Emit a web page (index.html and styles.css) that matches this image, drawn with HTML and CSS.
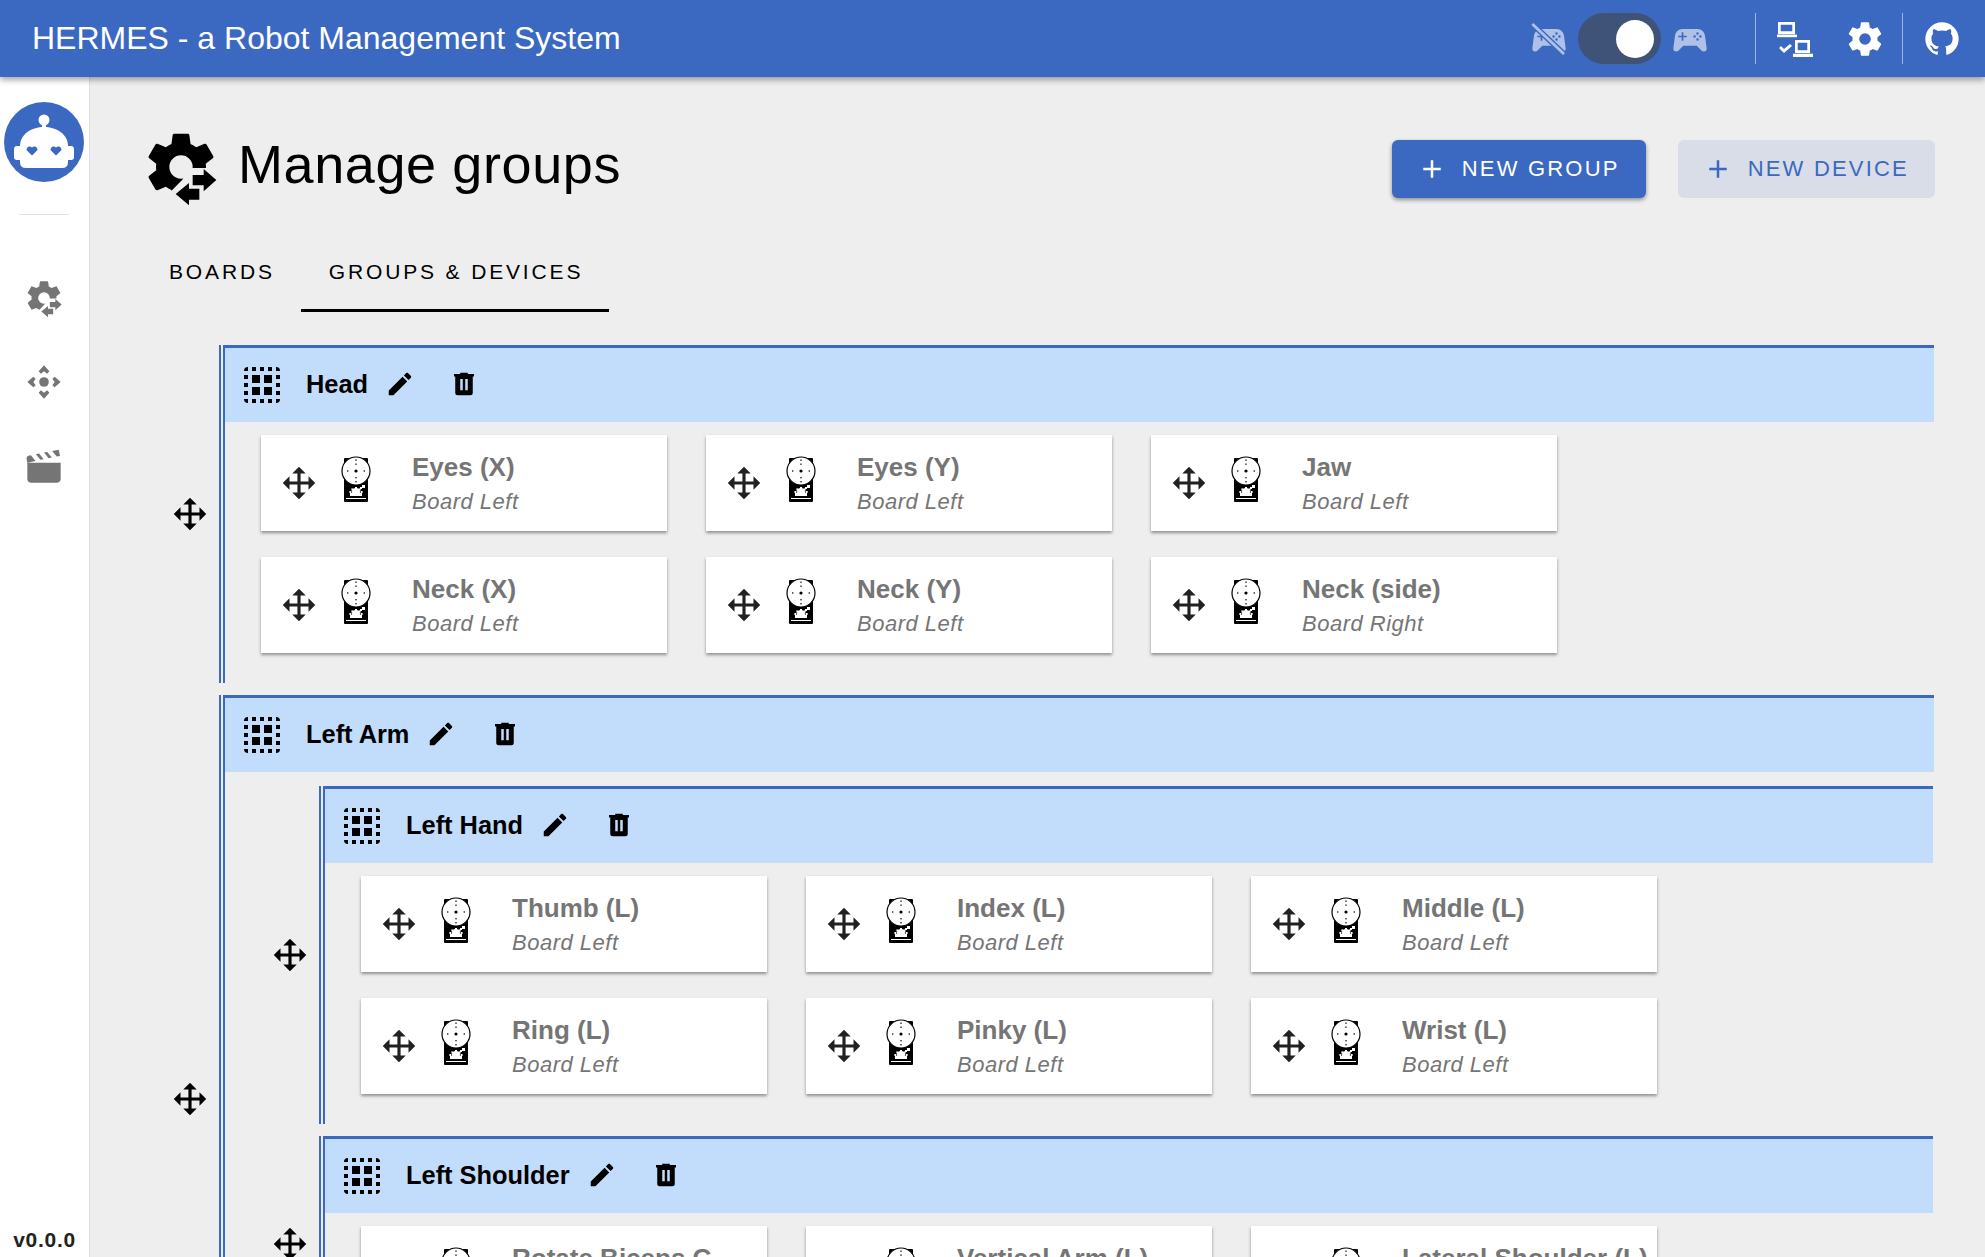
FILE: index.html
```html
<!DOCTYPE html>
<html lang="en">
  <head>
    <meta charset="UTF-8" />
    <title>HERMES - a Robot Management System</title>
    <link rel="stylesheet" href="styles.css">
  </head>
  <body>
    <!-- Shared icons -->
    <svg class="sprites" xmlns="http://www.w3.org/2000/svg">
      <symbol id="i-move" viewBox="0 0 24 24"><path d="M13,6V11H18V7.75L22.25,12L18,16.25V13H13V18H16.25L12,22.25L7.75,18H11V13H6V16.25L1.75,12L6,7.75V11H11V6H7.75L12,1.75L16.25,6H13Z"/></symbol>
      <symbol id="i-pencil" viewBox="0 0 24 24"><path d="M20.71,7.04C21.1,6.65 21.1,6 20.71,5.63L18.37,3.29C18,2.9 17.35,2.9 16.96,3.29L15.12,5.12L18.87,8.87M3,17.25V21H6.75L17.81,9.93L14.06,6.18L3,17.25Z"/></symbol>
      <symbol id="i-trash" viewBox="0 0 24 24"><path d="M9,3V4H4V6H5V19A2,2 0 0,0 7,21H17A2,2 0 0,0 19,19V6H20V4H15V3H9M9,8H11V17H9V8M13,8H15V17H13V8Z"/></symbol>
      <symbol id="i-select" viewBox="0 0 24 24"><path d="M5,3A2,2 0 0,0 3,5H5M7,3V5H9V3M11,3V5H13V3M15,3V5H17V3M19,3V5H21A2,2 0 0,0 19,3M3,7V9H5V7M7,7V11H11V7M13,7V11H17V7M19,7V9H21V7M3,11V13H5V11M19,11V13H21V11M7,13V17H11V13M13,13V17H17V13M3,15V17H5V15M19,15V17H21V15M3,19A2,2 0 0,0 5,21V19M7,19V21H9V19M11,19V21H13V19M15,19V21H17V19M19,19V21A2,2 0 0,0 21,19Z"/></symbol>
      <symbol id="i-plus" viewBox="0 0 24 24"><path d="M19,13H13V19H11V13H5V11H11V5H13V11H19V13Z"/></symbol>
      <symbol id="i-cog" viewBox="0 0 24 24"><path d="M12,15.5A3.5,3.5 0 0,1 8.5,12A3.5,3.5 0 0,1 12,8.5A3.5,3.5 0 0,1 15.5,12A3.5,3.5 0 0,1 12,15.5M19.43,12.97C19.47,12.65 19.5,12.33 19.5,12C19.5,11.67 19.47,11.34 19.43,11L21.54,9.37C21.73,9.22 21.78,8.95 21.66,8.73L19.66,5.27C19.54,5.05 19.27,4.96 19.05,5.05L16.56,6.05C16.04,5.66 15.5,5.32 14.87,5.07L14.5,2.42C14.46,2.18 14.25,2 14,2H10C9.75,2 9.54,2.18 9.5,2.42L9.13,5.07C8.5,5.32 7.96,5.66 7.44,6.05L4.95,5.05C4.73,4.96 4.46,5.05 4.34,5.27L2.34,8.73C2.21,8.95 2.27,9.22 2.46,9.37L4.57,11C4.53,11.34 4.5,11.67 4.5,12C4.5,12.33 4.53,12.65 4.57,12.97L2.46,14.63C2.27,14.78 2.21,15.05 2.34,15.27L4.34,18.73C4.46,18.95 4.73,19.03 4.95,18.95L7.44,17.94C7.96,18.34 8.5,18.68 9.13,18.93L9.5,21.58C9.54,21.82 9.75,22 10,22H14C14.25,22 14.46,21.82 14.5,21.58L14.87,18.93C15.5,18.67 16.04,18.34 16.56,17.94L19.05,18.95C19.27,19.03 19.54,18.95 19.66,18.73L21.66,15.27C21.78,15.05 21.73,14.78 21.54,14.63L19.43,12.97Z"/></symbol>
      <symbol id="i-cog-transfer" viewBox="0 0 24 24">
        <path d="M12,15.5A3.5,3.5 0 0,1 8.5,12A3.5,3.5 0 0,1 12,8.5A3.5,3.5 0 0,1 15.5,12A3.5,3.5 0 0,1 12,15.5M19.43,12.97C19.47,12.65 19.5,12.33 19.5,12C19.5,11.67 19.47,11.34 19.43,11L21.54,9.37C21.73,9.22 21.78,8.95 21.66,8.73L19.66,5.27C19.54,5.05 19.27,4.96 19.05,5.05L16.56,6.05C16.04,5.66 15.5,5.32 14.87,5.07L14.5,2.42C14.46,2.18 14.25,2 14,2H10C9.75,2 9.54,2.18 9.5,2.42L9.13,5.07C8.5,5.32 7.96,5.66 7.44,6.05L4.95,5.05C4.73,4.96 4.46,5.05 4.34,5.27L2.34,8.73C2.21,8.95 2.27,9.22 2.46,9.37L4.57,11C4.53,11.34 4.5,11.67 4.5,12C4.5,12.33 4.53,12.65 4.57,12.97L2.46,14.63C2.27,14.78 2.21,15.05 2.34,15.27L4.34,18.73C4.46,18.95 4.73,19.03 4.95,18.95L7.44,17.94C7.96,18.34 8.5,18.68 9.13,18.93L9.5,21.58C9.54,21.82 9.75,22 10,22H14C14.25,22 14.46,21.82 14.5,21.58L14.87,18.93C15.5,18.67 16.04,18.34 16.56,17.94L19.05,18.95C19.27,19.03 19.54,18.95 19.66,18.73L21.66,15.27C21.78,15.05 21.73,14.78 21.54,14.63L19.43,12.97Z"/>
        <polygon class="knock" points="8.7,19.6 12.4,15.8 14.6,12.3 24,12.3 24,24 8.7,24"/>
        <polygon points="15.5,14.4 18.8,14.4 18.8,12.6 22.6,15.9 18.8,19.3 18.8,17.5 15.5,17.5"/>
        <polygon points="17.5,18.5 14.4,18.5 14.4,16.8 10.4,20.1 14.4,23.5 14.4,21.8 17.5,21.8"/>
      </symbol>
      <symbol id="i-joints" viewBox="0 0 24 24">
        <circle cx="12" cy="12" r="2.9"/>
        <polygon points="12,2 15.2,5.6 13.9,7 12,5.6 10.1,7 8.8,5.6"/>
        <polygon points="12,22 15.2,18.4 13.9,17 12,18.4 10.1,17 8.8,18.4"/>
        <polygon points="2,12 5.6,8.8 7,10.1 5.6,12 7,13.9 5.6,15.2"/>
        <polygon points="22,12 18.4,8.8 17,10.1 18.4,12 17,13.9 18.4,15.2"/>
      </symbol>
      <symbol id="i-movie" viewBox="0 0 24 24"><path d="M20.84 2.18L16.91 2.96L19.65 6.32L21.62 5.93L20.84 2.18M13.97 3.54L12 3.93L14.75 7.31L16.71 6.91L13.97 3.54M9.07 4.5L7.1 4.91L9.85 8.27L11.81 7.89L9.07 4.5M4.16 5.5L3.18 5.69A2 2 0 0 0 1.61 8.04L2 10L6.9 9.03L4.16 5.5M2 10V20C2 21.11 2.9 22 4 22H20C21.11 22 22 21.11 22 20V10H2Z"/></symbol>
      <symbol id="i-controller" viewBox="0 0 24 24"><path d="M7.97,16L5,19C4.67,19.3 4.23,19.5 3.75,19.5A1.75,1.75 0 0,1 2,17.75V17.5L3,10.12C3.21,7.81 5.14,6 7.5,6H16.5C18.86,6 20.79,7.81 21,10.12L22,17.5V17.75A1.75,1.75 0 0,1 20.25,19.5C19.77,19.5 19.33,19.3 19,19L16.03,16H7.97M7,8V10H5V11H7V13H8V11H10V10H8V8H7M16.5,8A0.75,0.75 0 0,0 15.75,8.75A0.75,0.75 0 0,0 16.5,9.5A0.75,0.75 0 0,0 17.25,8.75A0.75,0.75 0 0,0 16.5,8M14.75,9.75A0.75,0.75 0 0,0 14,10.5A0.75,0.75 0 0,0 14.75,11.25A0.75,0.75 0 0,0 15.5,10.5A0.75,0.75 0 0,0 14.75,9.75M18.25,9.75A0.75,0.75 0 0,0 17.5,10.5A0.75,0.75 0 0,0 18.25,11.25A0.75,0.75 0 0,0 19,10.5A0.75,0.75 0 0,0 18.25,9.75M16.5,11.5A0.75,0.75 0 0,0 15.75,12.25A0.75,0.75 0 0,0 16.5,13A0.75,0.75 0 0,0 17.25,12.25A0.75,0.75 0 0,0 16.5,11.5Z"/></symbol>
      <symbol id="i-github" viewBox="0 0 24 24"><path d="M12,2A10,10 0 0,0 2,12C2,16.42 4.87,20.17 8.84,21.5C9.34,21.58 9.5,21.27 9.5,21C9.5,20.77 9.5,20.14 9.5,19.31C6.73,19.91 6.14,17.97 6.14,17.97C5.68,16.81 5.03,16.5 5.03,16.5C4.12,15.88 5.1,15.9 5.1,15.9C6.1,15.97 6.63,16.93 6.63,16.93C7.5,18.45 8.97,18 9.54,17.76C9.63,17.11 9.89,16.67 10.17,16.42C7.95,16.17 5.64,15.31 5.64,11.5C5.64,10.39 6,9.5 6.65,8.79C6.55,8.54 6.2,7.5 6.75,6.15C6.75,6.15 7.59,5.88 9.5,7.17C10.29,6.95 11.15,6.84 12,6.84C12.85,6.84 13.71,6.95 14.5,7.17C16.41,5.88 17.25,6.15 17.25,6.15C17.8,7.5 17.45,8.54 17.35,8.79C18,9.5 18.36,10.39 18.36,11.5C18.36,15.32 16.04,16.16 13.81,16.41C14.17,16.72 14.5,17.33 14.5,18.26C14.5,19.6 14.5,20.68 14.5,21C14.5,21.27 14.66,21.59 15.17,21.5C19.14,20.16 22,16.42 22,12A10,10 0 0,0 12,2Z"/></symbol>
      <symbol id="i-servo" viewBox="0 0 30 46">
        <rect x="3" y="2" width="24" height="44" rx="1" fill="#000"/>
        <circle cx="15" cy="15" r="14" fill="#fff" stroke="#000" stroke-width="1.2"/>
        <circle cx="15" cy="15" r="1.6" fill="#000"/>
        <g fill="#000">
          <rect x="14.4" y="3.5" width="1.2" height="1.4"/>
          <rect x="14.4" y="7.5" width="1.2" height="1.4"/>
          <rect x="14.4" y="21" width="1.2" height="1.4"/>
          <rect x="14.4" y="25" width="1.2" height="1.4"/>
          <rect x="6" y="14.4" width="1.4" height="1.2"/>
          <rect x="22.6" y="14.4" width="1.4" height="1.2"/>
        </g>
        <g fill="#fff">
          <circle cx="15" cy="36" r="4"/>
          <rect x="9" y="37" width="12" height="3"/>
          <rect x="14" y="31" width="2" height="2.5"/>
          <rect x="10.4" y="32.4" width="2" height="2.2"/>
          <rect x="17.6" y="32.4" width="2" height="2.2"/>
          <rect x="8.4" y="35" width="2" height="2"/>
          <rect x="19.600" y="35" width="2" height="2"/>
          <rect x="21" y="29" width="3" height="3"/>
          <rect x="19" y="31" width="2" height="2"/>
          <rect x="5" y="42" width="20" height="1"/>
        </g>
      </symbol>
    </svg>

    <header class="topbar">
      <div class="topbar-title">HERMES - a Robot Management System</div>
      <div class="topbar-tools">
        <svg class="tb-icon tb-faded controller-off" viewBox="0 0 24 24">
          <use href="#i-controller"/>
          <line class="slash-gap" x1="2" y1="3" x2="21" y2="21"/>
          <line class="slash" x1="2" y1="3" x2="21" y2="21"/>
        </svg>
        <div class="switch"><span class="knob"></span></div>
        <svg class="tb-icon tb-faded"><use href="#i-controller"/></svg>
        <span class="tb-divider first"></span>
        <svg class="tb-laptops" viewBox="0 0 36 36" fill="#fff">
          <path d="M1 1H18V13H1ZM3.7 3.7V10.3H15.3V3.7Z" fill-rule="evenodd"/>
          <rect x="0" y="13.5" width="20" height="2.7"/>
          <path d="M18 19H33V32H18ZM20.7 21.7V29.3H30.3V21.7Z" fill-rule="evenodd"/>
          <rect x="16" y="32.7" width="20" height="3.3"/>
          <path d="M2 27L4 25L7 28L13 23L15 25L7 32Z"/>
        </svg>
        <svg class="tb-icon cog-icon"><use href="#i-cog"/></svg>
        <span class="tb-divider"></span>
        <svg class="tb-icon github-icon"><use href="#i-github"/></svg>
      </div>
    </header>

    <div class="layout">
      <aside class="sidebar">
        <svg class="avatar" viewBox="0 0 80 80">
          <circle cx="40" cy="40" r="40" fill="#3b68c1"/>
          <g fill="#fff">
            <circle cx="40" cy="18" r="5.5"/>
            <rect x="38" y="20" width="4" height="8"/>
            <path d="M22 66Q16 66 16 60V44C16 32 28 25 40 25C52 25 64 32 64 44V60Q64 66 58 66Z"/>
            <rect x="10" y="44" width="60" height="14" rx="3"/>
          </g>
          <g fill="#3b68c1">
            <path d="M28 53.5L22.5 48A3.2 3.2 0 0 1 28 45.5A3.2 3.2 0 0 1 33.5 48Z"/>
            <path d="M52 53.5L46.5 48A3.2 3.2 0 0 1 52 45.5A3.2 3.2 0 0 1 57.5 48Z"/>
          </g>
        </svg>
        <hr class="side-divider" />
        <nav class="side-nav">
          <svg class="side-icon"><use href="#i-cog-transfer"/></svg>
          <svg class="side-icon"><use href="#i-joints"/></svg>
          <svg class="side-icon"><use href="#i-movie"/></svg>
        </nav>
        <div class="version">v0.0.0</div>
      </aside>

      <main class="content">
        <div class="page-head">
          <svg class="page-icon"><use href="#i-cog-transfer"/></svg>
          <h1 class="page-title">Manage groups</h1>
          <button class="btn btn-primary"><svg class="btn-icon"><use href="#i-plus"/></svg>NEW GROUP</button>
          <button class="btn btn-muted"><svg class="btn-icon"><use href="#i-plus"/></svg>NEW DEVICE</button>
        </div>

        <div class="tabs">
          <div class="tab">BOARDS</div>
          <div class="tab active">GROUPS &amp; DEVICES</div>
        </div>

        <div class="groups">
          <!-- Head -->
          <section class="group">
            <div class="handle"><svg class="move-icon"><use href="#i-move"/></svg></div>
            <div class="group-line">
              <div class="group-box">
                <div class="group-bar">
                  <svg class="select-icon"><use href="#i-select"/></svg>
                  <span class="group-name">Head</span>
                  <svg class="bar-icon"><use href="#i-pencil"/></svg>
                  <svg class="bar-icon trash"><use href="#i-trash"/></svg>
                </div>
                <div class="cards">
                  <div class="card"><svg class="move-icon"><use href="#i-move"/></svg><svg class="servo"><use href="#i-servo"/></svg><div class="card-text"><div class="card-name">Eyes (X)</div><div class="card-board">Board Left</div></div></div>
                  <div class="card"><svg class="move-icon"><use href="#i-move"/></svg><svg class="servo"><use href="#i-servo"/></svg><div class="card-text"><div class="card-name">Eyes (Y)</div><div class="card-board">Board Left</div></div></div>
                  <div class="card"><svg class="move-icon"><use href="#i-move"/></svg><svg class="servo"><use href="#i-servo"/></svg><div class="card-text"><div class="card-name">Jaw</div><div class="card-board">Board Left</div></div></div>
                  <div class="card"><svg class="move-icon"><use href="#i-move"/></svg><svg class="servo"><use href="#i-servo"/></svg><div class="card-text"><div class="card-name">Neck (X)</div><div class="card-board">Board Left</div></div></div>
                  <div class="card"><svg class="move-icon"><use href="#i-move"/></svg><svg class="servo"><use href="#i-servo"/></svg><div class="card-text"><div class="card-name">Neck (Y)</div><div class="card-board">Board Left</div></div></div>
                  <div class="card"><svg class="move-icon"><use href="#i-move"/></svg><svg class="servo"><use href="#i-servo"/></svg><div class="card-text"><div class="card-name">Neck (side)</div><div class="card-board">Board Right</div></div></div>
                </div>
              </div>
            </div>
          </section>

          <!-- Left Arm -->
          <section class="group group-parent">
            <div class="handle"><svg class="move-icon"><use href="#i-move"/></svg></div>
            <div class="group-line">
              <div class="group-box">
                <div class="group-bar">
                  <svg class="select-icon"><use href="#i-select"/></svg>
                  <span class="group-name">Left Arm</span>
                  <svg class="bar-icon"><use href="#i-pencil"/></svg>
                  <svg class="bar-icon trash"><use href="#i-trash"/></svg>
                </div>
                <div class="children">
                  <section class="group">
                    <div class="handle"><svg class="move-icon"><use href="#i-move"/></svg></div>
                    <div class="group-line">
                      <div class="group-box">
                        <div class="group-bar">
                          <svg class="select-icon"><use href="#i-select"/></svg>
                          <span class="group-name">Left Hand</span>
                          <svg class="bar-icon"><use href="#i-pencil"/></svg>
                          <svg class="bar-icon trash"><use href="#i-trash"/></svg>
                        </div>
                        <div class="cards">
                          <div class="card"><svg class="move-icon"><use href="#i-move"/></svg><svg class="servo"><use href="#i-servo"/></svg><div class="card-text"><div class="card-name">Thumb (L)</div><div class="card-board">Board Left</div></div></div>
                          <div class="card"><svg class="move-icon"><use href="#i-move"/></svg><svg class="servo"><use href="#i-servo"/></svg><div class="card-text"><div class="card-name">Index (L)</div><div class="card-board">Board Left</div></div></div>
                          <div class="card"><svg class="move-icon"><use href="#i-move"/></svg><svg class="servo"><use href="#i-servo"/></svg><div class="card-text"><div class="card-name">Middle (L)</div><div class="card-board">Board Left</div></div></div>
                          <div class="card"><svg class="move-icon"><use href="#i-move"/></svg><svg class="servo"><use href="#i-servo"/></svg><div class="card-text"><div class="card-name">Ring (L)</div><div class="card-board">Board Left</div></div></div>
                          <div class="card"><svg class="move-icon"><use href="#i-move"/></svg><svg class="servo"><use href="#i-servo"/></svg><div class="card-text"><div class="card-name">Pinky (L)</div><div class="card-board">Board Left</div></div></div>
                          <div class="card"><svg class="move-icon"><use href="#i-move"/></svg><svg class="servo"><use href="#i-servo"/></svg><div class="card-text"><div class="card-name">Wrist (L)</div><div class="card-board">Board Left</div></div></div>
                        </div>
                      </div>
                    </div>
                  </section>
                  <section class="group">
                    <div class="handle"><svg class="move-icon"><use href="#i-move"/></svg></div>
                    <div class="group-line">
                      <div class="group-box">
                        <div class="group-bar">
                          <svg class="select-icon"><use href="#i-select"/></svg>
                          <span class="group-name">Left Shoulder</span>
                          <svg class="bar-icon"><use href="#i-pencil"/></svg>
                          <svg class="bar-icon trash"><use href="#i-trash"/></svg>
                        </div>
                        <div class="cards">
                          <div class="card"><svg class="move-icon"><use href="#i-move"/></svg><svg class="servo"><use href="#i-servo"/></svg><div class="card-text"><div class="card-name">Rotate Biceps C</div><div class="card-board">Board Left</div></div></div>
                          <div class="card"><svg class="move-icon"><use href="#i-move"/></svg><svg class="servo"><use href="#i-servo"/></svg><div class="card-text"><div class="card-name">Vertical Arm (L)</div><div class="card-board">Board Left</div></div></div>
                          <div class="card"><svg class="move-icon"><use href="#i-move"/></svg><svg class="servo"><use href="#i-servo"/></svg><div class="card-text"><div class="card-name">Lateral Shoulder (L)</div><div class="card-board">Board Left</div></div></div>
                        </div>
                      </div>
                    </div>
                  </section>
                </div>
              </div>
            </div>
          </section>
        </div>
      </main>
    </div>
  </body>
</html>
```

FILE: styles.css
```css
html, body {
  height: 100%;
  margin: 0;
  overflow: hidden;
}
body {
  display: flex;
  flex-direction: column;
  background-color: #eeeeee;
  color: #000;
  font-family: "Liberation Sans", Arial, sans-serif;
}
.sprites {
  display: none;
}
.knock {
  fill: var(--knock, #eeeeee);
}

/* top bar */
.topbar {
  position: relative;
  z-index: 2;
  flex: none;
  display: flex;
  align-items: center;
  justify-content: space-between;
  height: 77px;
  padding: 0 23px 0 32px;
  background-color: #3b68c1;
  color: #fff;
  box-shadow: 0 3px 6px rgba(0, 0, 0, 0.35);
}
.topbar-title {
  font-size: 32px;
}
.topbar-tools {
  display: flex;
  align-items: center;
}
.tb-icon {
  width: 40px;
  height: 40px;
  fill: #fff;
}
.tb-faded {
  fill: #afc1e6;
}
.slash-gap {
  stroke: #3b68c1;
  stroke-width: 3.4;
}
.slash {
  stroke: #afc1e6;
  stroke-width: 1.7;
}
.switch {
  display: flex;
  align-items: center;
  justify-content: flex-end;
  width: 83px;
  height: 51px;
  margin: 0 9px;
  padding-right: 7px;
  box-sizing: border-box;
  border-radius: 26px;
  background-color: #3f5378;
}
.knob {
  width: 38px;
  height: 38px;
  border-radius: 50%;
  background-color: #fff;
}
.tb-divider {
  width: 1px;
  height: 51px;
  margin: 0 19px 0 17px;
  background-color: rgba(255, 255, 255, 0.5);
}
.tb-divider.first {
  margin: 0 21px 0 45px;
}
.tb-laptops {
  width: 36px;
  height: 36px;
}
.cog-icon {
  margin-left: 32px;
}

/* left rail */
.layout {
  flex: 1;
  display: flex;
  min-height: 0;
}
.sidebar {
  flex: none;
  display: flex;
  flex-direction: column;
  align-items: center;
  width: 89px;
  border-right: 1px solid #e0e0e0;
  background-color: #fff;
}
.avatar {
  width: 80px;
  height: 80px;
  margin: 25px 1px 0 0;
}
.side-divider {
  width: 50px;
  margin: 32px 1px 0 0;
  border: none;
  border-top: 1px solid #e0e0e0;
}
.side-nav {
  display: flex;
  flex-direction: column;
  gap: 44px;
  margin: 63px 1px 0 0;
}
.side-icon {
  --knock: #fff;
  width: 40px;
  height: 40px;
  fill: #757575;
}
.version {
  margin-top: auto;
  padding-bottom: 5px;
  font-size: 21px;
  font-weight: bold;
  letter-spacing: 0.7px;
  color: #222;
}

/* main area */
.content {
  flex: 1;
  min-width: 0;
  padding: 50px 50px 0 51px;
}
.page-head {
  display: flex;
  align-items: center;
  height: 80px;
}
.page-icon {
  flex: none;
  width: 80px;
  height: 80px;
  fill: #000;
}
.page-title {
  flex: 1;
  margin: 0 0 6px 17px;
  font-size: 54px;
  font-weight: normal;
  letter-spacing: 0.6px;
}
.btn {
  display: flex;
  align-items: center;
  gap: 15px;
  height: 58px;
  margin-top: 4px;
  padding: 0 26px 0 25px;
  border: none;
  border-radius: 6px;
  font-family: inherit;
  font-size: 22px;
  letter-spacing: 2.2px;
}
.btn-icon {
  width: 30px;
  height: 30px;
  fill: currentColor;
}
.btn-primary {
  background-color: #3b68c1;
  color: #fff;
  box-shadow: 0 2px 4px rgba(0, 0, 0, 0.4);
}
.btn-muted {
  margin-left: 32px;
  background-color: #d9dde8;
  color: #3b68c1;
}
.tabs {
  display: flex;
  margin-top: 25px;
}
.tab {
  display: flex;
  align-items: center;
  height: 80px;
  padding: 0 26px 0 28px;
  box-sizing: border-box;
  font-size: 21px;
  letter-spacing: 2.85px;
}
.tab.active {
  border-bottom: 3px solid #000;
  padding-top: 3px;
}

/* groups */
.groups {
  margin: 33px 1px 0 19px;
}
.group {
  display: flex;
  margin-bottom: 12px;
}
.group-parent {
  min-height: 808px;
}
.handle {
  flex: none;
  display: flex;
  align-items: center;
  justify-content: center;
  width: 59px;
}
.move-icon {
  flex: none;
  width: 38px;
  height: 38px;
}
.card .move-icon {
  fill: #212121;
}
.group-line {
  flex: 1;
  min-width: 0;
  padding-left: 2px;
  border-left: 2px solid #3b68c1;
}
.group-box {
  height: 100%;
  box-sizing: border-box;
  border-top: 3px solid #3b68c1;
  border-left: 2px solid #3b68c1;
}
.group-bar {
  display: flex;
  align-items: center;
  height: 74px;
  padding-left: 13px;
  background-color: #c2ddfb;
}
.select-icon {
  flex: none;
  width: 48px;
  height: 48px;
}
.group-name {
  margin: 0 17px 2px 20px;
  font-size: 25.4px;
  font-weight: bold;
}
.bar-icon {
  flex: none;
  width: 30px;
  height: 30px;
  margin-bottom: 2px;
}
.trash {
  margin-left: 34px;
}
.children {
  padding: 14px 1px 0 35px;
}
.cards {
  display: flex;
  flex-wrap: wrap;
  gap: 26px 39px;
  padding: 13px 0 30px 36px;
}
.card {
  display: flex;
  align-items: center;
  width: 406px;
  height: 96px;
  padding-left: 19px;
  box-sizing: border-box;
  background-color: #fff;
  box-shadow: 0 2px 3px rgba(0, 0, 0, 0.4);
}
.servo {
  flex: none;
  width: 30px;
  height: 46px;
  margin: 0 41px 8px 23px;
}
.card-text {
  margin-top: 2px;
  color: #757575;
}
.card-name {
  line-height: 34px;
  font-size: 26px;
  font-weight: bold;
}
.card-board {
  line-height: 34px;
  padding-top: 1px;
  font-size: 22px;
  font-style: italic;
  letter-spacing: 0.5px;
}
```
